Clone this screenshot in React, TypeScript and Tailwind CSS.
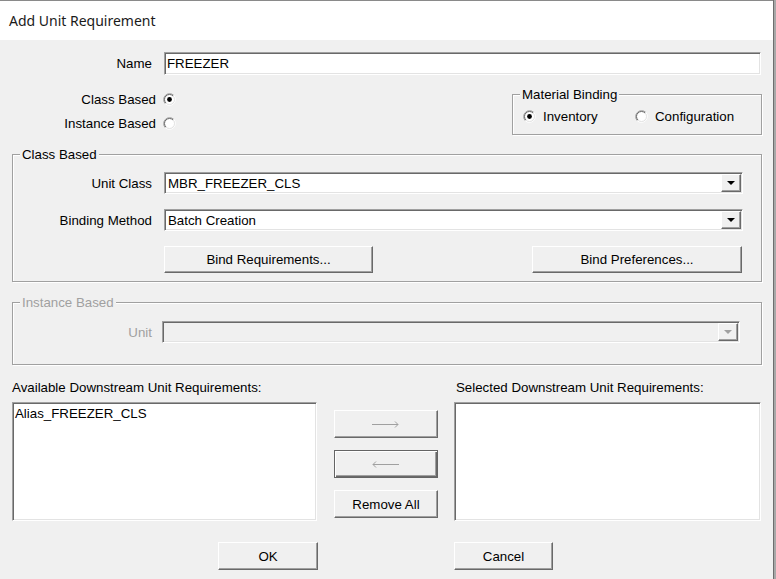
import React from 'react';

const sunken =
  'border border-t-[#a0a0a0] border-l-[#a0a0a0] border-b-white border-r-white shadow-[inset_1px_1px_0_#696969,inset_-1px_-1px_0_#e3e3e3]';
const raised =
  'border border-t-white border-l-white border-b-[#696969] border-r-[#696969] shadow-[inset_-1px_-1px_0_#a0a0a0] bg-[#f0f0f0]';

const Radio = ({ checked }: { checked?: boolean }) => (
  <svg width="13" height="13" viewBox="0 0 13 13" className="shrink-0">
    <circle cx="6.5" cy="6.5" r="5" fill="#fff" />
    <path d="M2.26 10.74 A6 6 0 0 1 10.74 2.26" fill="none" stroke="#a0a0a0" />
    <path d="M10.74 2.26 A6 6 0 0 1 2.26 10.74" fill="none" stroke="#fff" />
    <path d="M2.96 10.04 A5 5 0 0 1 10.04 2.96" fill="none" stroke="#696969" />
    <path d="M10.04 2.96 A5 5 0 0 1 2.96 10.04" fill="none" stroke="#e3e3e3" />
    {checked && <circle cx="6.5" cy="6.5" r="2.4" fill="#000" />}
  </svg>
);

const Legend = ({ children, disabled }: { children: React.ReactNode; disabled?: boolean }) => (
  <span
    className={`absolute -top-[8px] left-[7px] bg-[#f0f0f0] px-[2px] leading-[15px] ${
      disabled ? 'text-[#a0a0a0]' : 'text-black'
    }`}
  >
    {children}
  </span>
);

const groupBox =
  'relative border border-[#a0a0a0] shadow-[inset_1px_1px_0_#fff,1px_1px_0_#fff]';

const Combo = ({ value, width, disabled }: { value?: string; width: string; disabled?: boolean }) => (
  <div
    className={`${sunken} ${width} h-[22px] flex items-center ${
      disabled ? 'bg-[#f0f0f0]' : 'bg-white'
    }`}
  >
    <span className="flex-1 pl-[3px] truncate">{value}</span>
    <div className={`${raised} w-[20px] h-[18px] mr-[1px] flex items-center justify-center`}>
      <svg width="8" height="4" viewBox="0 0 8 4">
        <path d="M0 0 H8 L4 4 Z" fill={disabled ? '#a0a0a0' : '#000'} />
      </svg>
    </div>
  </div>
);

const Arrow = ({ left }: { left?: boolean }) => (
  <svg width="28" height="7" viewBox="0 0 28 7">
    {left ? (
      <path d="M1 3.5 H27 M4 0.5 L1 3.5 L4 6.5" fill="none" stroke="#a0a0a0" />
    ) : (
      <path d="M0 3.5 H26 M23 0.5 L26 3.5 L23 6.5" fill="none" stroke="#a0a0a0" />
    )}
  </svg>
);

export default function App() {
  return (
    <div
      className="w-[776px] h-[579px] flex overflow-hidden bg-[#f0f0f0] text-[13.3px] leading-[15px] text-black"
      style={{ fontFamily: '"Liberation Sans", Arial, sans-serif' }}
    >
      <div className="w-[773px] flex flex-col">
        {/* title bar */}
        <div className="h-[40px] shrink-0 bg-white border-t border-[#8a8a8a] flex items-center pl-[9px]">
          <span
            className="text-[14px] text-[#1a1a1a]"
            style={{ fontFamily: '"Noto Sans", "Open Sans", sans-serif' }}
          >
            Add Unit Requirement
          </span>
        </div>

        {/* name */}
        <div className="mt-[12px] flex items-center">
          <span className="w-[152px] text-right">Name</span>
          <div className={`${sunken} ml-[12px] w-[597px] h-[23px] bg-white flex items-center pl-[2px]`}>
            FREEZER
          </div>
        </div>

        {/* based on + material binding */}
        <div className="mt-[12px] flex">
          <div className="w-[176px] flex flex-col">
            <div className="h-[24px] flex items-center justify-end gap-[7px]">
              <span>Class Based</span>
              <Radio checked />
            </div>
            <div className="h-[24px] flex items-center justify-end gap-[7px]">
              <span>Instance Based</span>
              <Radio />
            </div>
          </div>
          <div className={`${groupBox} ml-[336px] mt-[7px] w-[250px] h-[41px]`}>
            <Legend>Material Binding</Legend>
            <div className="pt-[14px] pl-[10px] flex items-center">
              <div className="w-[112px] flex items-center gap-[7px]">
                <Radio checked />
                <span>Inventory</span>
              </div>
              <div className="flex items-center gap-[7px]">
                <Radio />
                <span>Configuration</span>
              </div>
            </div>
          </div>
        </div>

        {/* class based */}
        <div className={`${groupBox} mt-[19px] ml-[12px] w-[750px] h-[128px] pt-[17px]`}>
          <Legend>Class Based</Legend>
          <div className="flex items-center h-[22px]">
            <span className="w-[139px] text-right">Unit Class</span>
            <div className="ml-[12px]">
              <Combo value="MBR_FREEZER_CLS" width="w-[579px]" />
            </div>
          </div>
          <div className="mt-[15px] flex items-center h-[22px]">
            <span className="w-[139px] text-right">Binding Method</span>
            <div className="ml-[12px]">
              <Combo value="Batch Creation" width="w-[579px]" />
            </div>
          </div>
          <div className="mt-[15px] ml-[151px] w-[578px] flex justify-between">
            <button className={`${raised} w-[209px] h-[27px]`}>Bind Requirements...</button>
            <button className={`${raised} w-[210px] h-[27px]`}>Bind Preferences...</button>
          </div>
        </div>

        {/* instance based */}
        <div className={`${groupBox} mt-[20px] ml-[12px] w-[750px] h-[63px] pt-[18px]`}>
          <Legend disabled>Instance Based</Legend>
          <div className="flex items-center h-[22px]">
            <span className="w-[139px] text-right text-[#a0a0a0]">Unit</span>
            <div className="ml-[10px]">
              <Combo width="w-[578px]" disabled />
            </div>
          </div>
        </div>

        {/* downstream lists */}
        <div className="mt-[15px] flex h-[15px]">
          <span className="ml-[12px] w-[444px]">Available Downstream Unit Requirements:</span>
          <span>Selected Downstream Unit Requirements:</span>
        </div>
        <div className="mt-[7px] flex">
          <div className={`${sunken} ml-[12px] w-[305px] h-[119px] bg-white pt-[3px] pl-[2px]`}>
            Alias_FREEZER_CLS
          </div>
          <div className="ml-[17px] w-[104px] pt-[8px] flex flex-col gap-[12px]">
            <button className={`${raised} h-[28px] flex items-center justify-center`}>
              <Arrow />
            </button>
            <button className="h-[28px] flex items-center justify-center bg-[#f0f0f0] border border-[#646464] shadow-[inset_1px_1px_0_#fff,inset_-1px_-1px_0_#696969,inset_-2px_-2px_0_#a0a0a0]">
              <Arrow left />
            </button>
            <button className={`${raised} h-[28px]`}>Remove All</button>
          </div>
          <div className={`${sunken} ml-[16px] w-[307px] h-[119px] bg-white`} />
        </div>

        {/* ok / cancel */}
        <div className="mt-[21px] flex">
          <button className={`${raised} ml-[218px] w-[100px] h-[28px]`}>OK</button>
          <button className={`${raised} ml-[136px] w-[99px] h-[28px]`}>Cancel</button>
        </div>
      </div>
      <div className="w-[1px] bg-[#6e6e6e]" />
      <div className="w-[2px] bg-[#a8a8a8]" />
    </div>
  );
}
